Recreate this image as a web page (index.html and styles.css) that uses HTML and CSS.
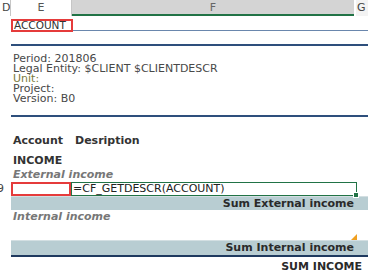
FILE: index.html
```html
<!DOCTYPE html>
<html>
<head>
<meta charset="utf-8">
<link rel="stylesheet" href="styles.css">
</head>
<body>
<div class="hdr">
  <div class="h h-d">D</div>
  <div class="h h-e">E</div>
  <div class="h h-f">F</div>
  <div class="h h-g">G</div>
</div>
<div class="sheet">
  <div class="r1"><div class="acct">ACCOUNT</div><div class="r1-fill"></div></div>
  <div class="rule rule-a"></div>
  <div class="info">
    <div>Period: 201806</div>
    <div>Legal Entity: $CLIENT $CLIENTDESCR</div>
    <div class="unit">Unit:</div>
    <div>Project:</div>
    <div>Version: B0</div>
  </div>
  <div class="rule rule-b"></div>
  <div class="row colhead"><span class="c-acc">Account</span><span>Desription</span></div>
  <div class="row income">INCOME</div>
  <div class="row sub">External income</div>
  <div class="row r9">
    <div class="rownum"><span>9</span></div>
    <div class="cell-red"></div>
    <div class="cell-green">=CF_GETDESCR(ACCOUNT)<span class="handle"></span></div>
  </div>
  <div class="row sum">Sum External income</div>
  <div class="row sub">Internal income</div>
  <div class="row blank"><span class="tri"></span></div>
  <div class="row sum sum-last">Sum Internal income</div>
  <div class="row total">SUM INCOME</div>
</div>
</body>
</html>
```
FILE: styles.css
```css
html, body {
  margin: 0;
  padding: 0;
}
body {
  width: 368px;
  height: 274px;
  overflow: hidden;
  background: #fff;
  font-family: "DejaVu Sans", Verdana, sans-serif;
  font-size: 11px;
  color: #333;
}
.hdr {
  display: flex;
  height: 16px;
  font-size: 11px;
  line-height: 15px;
}
.h {
  box-sizing: border-box;
  height: 16px;
}
.h-d {
  width: 11px;
  border-right: 1px solid #c6c6c6;
  padding-left: 2px;
  color: #444;
  overflow: hidden;
}
.h-e {
  width: 61px;
  text-align: center;
  color: #555;
  border-right: 1px solid #c6c6c6;
}
.h-f {
  width: 282px;
  background: #d4d4d4;
  border-bottom: 2px solid #217346;
  text-align: center;
  color: #666;
}
.h-g {
  flex: 1;
  margin-left: 2px;
  background: #f3f3f3;
  padding-left: 1px;
  color: #444;
  overflow: hidden;
}
.sheet {
  padding-left: 11px;
}
.r1 {
  display: flex;
  height: 16px;
  align-items: flex-end;
}
.acct {
  width: 62px;
  height: 13px;
  box-sizing: border-box;
  border: 2px solid #e53b3b;
  line-height: 9px;
  padding-left: 1px;
  font-size: 10.5px;
  color: #333;
}
.r1-fill {
  flex: 1;
  border-bottom: 1px solid #6a87ad;
  margin-bottom: 1px;
}
.rule {
  height: 2px;
  background: #2e4f7c;
}
.rule-a {
  margin-top: 12px;
}
.info {
  padding-left: 2px;
  margin-top: 8px;
  line-height: 10px;
  color: #484848;
}
.unit {
  color: #7a7a3a;
}
.rule-b {
  margin-top: 11px;
}
.row {
  height: 14px;
  line-height: 14px;
  padding-left: 2px;
  white-space: nowrap;
}
.colhead {
  margin-top: 17px;
  font-weight: bold;
  display: flex;
}
.c-acc {
  width: 62px;
}
.income {
  margin-top: 6px;
  font-weight: bold;
}
.sub {
  font-style: italic;
  font-weight: bold;
  color: #777;
}
.r9 {
  margin-left: -11px;
  padding-left: 0;
  display: flex;
}
.rownum {
  width: 11px;
  overflow: hidden;
  color: #444;
}
.rownum span {
  margin-left: -3px;
}
.cell-red {
  width: 60px;
  box-sizing: border-box;
  border: 2px solid #e53b3b;
}
.cell-green {
  position: relative;
  width: 286px;
  box-sizing: border-box;
  border: 1px solid #217346;
  line-height: 12px;
  padding-left: 1px;
  color: #222;
}
.handle {
  position: absolute;
  right: -3px;
  bottom: -3px;
  width: 4px;
  height: 4px;
  background: #217346;
  border: 1px solid #fff;
}
.sum {
  box-sizing: border-box;
  background: #b8cdd2;
  border-top: 1px solid #d3dfe2;
  line-height: 13px;
  text-align: right;
  font-weight: bold;
  padding-right: 14px;
  color: #2a2a2a;
}
.blank {
  height: 16px;
  position: relative;
}
.tri {
  position: absolute;
  right: 11px;
  bottom: 0;
  width: 6px;
  height: 6px;
  background: #f0a020;
  clip-path: polygon(100% 0, 100% 100%, 0 100%);
}
.sum-last {
  box-sizing: content-box;
  border-bottom: 2px solid #1f3a5f;
}
.total {
  margin-top: 3px;
  text-align: right;
  padding-right: 6px;
  font-weight: bold;
  color: #2a2a2a;
}
```
